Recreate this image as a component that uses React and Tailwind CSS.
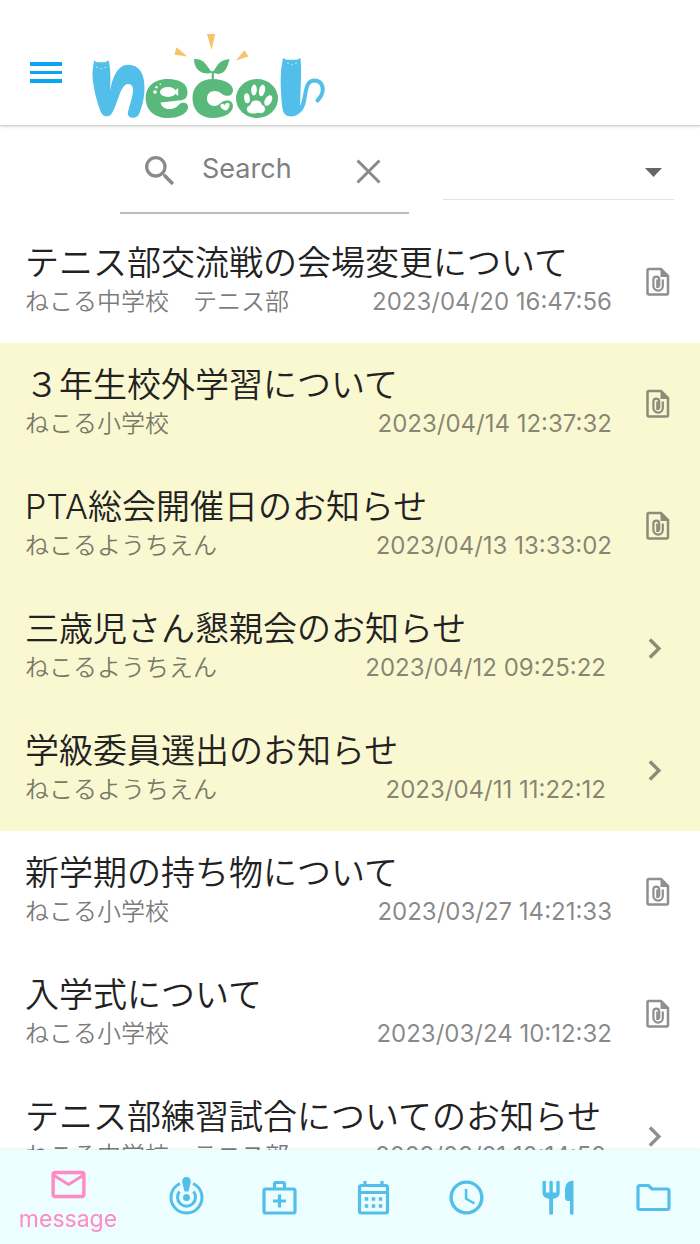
import React, { useState } from 'react';
import { MdAccessTime, MdChevronRight, MdMailOutline, MdSearch } from 'react-icons/md';

const MESSAGES = [
  { id: 1, title: 'テニス部交流戦の会場変更について', from: 'ねこる中学校　テニス部', date: '2023/04/20 16:47:56', file: true },
  { id: 2, title: '３年生校外学習について', from: 'ねこる小学校', date: '2023/04/14 12:37:32', file: true, unread: true },
  { id: 3, title: 'PTA総会開催日のお知らせ', from: 'ねこるようちえん', date: '2023/04/13 13:33:02', file: true, unread: true },
  { id: 4, title: '三歳児さん懇親会のお知らせ', from: 'ねこるようちえん', date: '2023/04/12 09:25:22', unread: true },
  { id: 5, title: '学級委員選出のお知らせ', from: 'ねこるようちえん', date: '2023/04/11 11:22:12', unread: true },
  { id: 6, title: '新学期の持ち物について', from: 'ねこる小学校', date: '2023/03/27 14:21:33', file: true },
  { id: 7, title: '入学式について', from: 'ねこる小学校', date: '2023/03/24 10:12:32', file: true },
  { id: 8, title: 'テニス部練習試合についてのお知らせ', from: 'ねこる中学校　テニス部', date: '2023/03/21 10:14:52' },
];

function Logo() {
  return (
    <svg viewBox="90 30 240 95" className="w-60 h-[95px]" role="img" aria-label="necol">
      {/* rays */}
      <path fill="#f8c26c" d="M207 34h8.2l-3.6 16zM176.5 47.3l-2 7.4 13 1.8zM244.5 50.2l4 6.4-12.7 3.8z" />
      {/* n */}
      <path fill="#52bfea" d="M94 60.5L97 62.3H105.3L108.5 60.3C110 66 111 74 110 91.5C112 77 118 64.7 128 64.7C139 64.7 144.5 73 144.5 88C144.5 98 142 107 139.5 113C138 117 135 118 132 117.8C128 117 127 114 128.5 110C130 104 133 96 133 90C133 86 131 84 128 84C124 84 121 90 119 96C116 104 114 111 111 114.5C109 117 104 117 102 114C98 107 92 84 92.5 72C92.8 67 94 64 94 60.5Z" />
      {/* e */}
      <path fill="#58b97b" d="M168 79C180 79 187.5 84 187.5 92C187.5 98 185 99.7 181 100.2L160.5 102.4C161.5 107 165 109 170 109C175 109 177 106.5 179.5 104C182 102 188 102 188 107C188 113 180 118 168 118C154 118 145.7 110 145.7 98C145.7 86 155 79 168 79Z" />
      <g fill="#fff">
        <ellipse cx="168" cy="92" rx="8" ry="5" />
        <path d="M173 92l5.2-4v8z" />
        <circle cx="155" cy="92" r="1.8" />
        <circle cx="156.5" cy="87.2" r="1.2" />
        <circle cx="160.3" cy="84.2" r="0.8" />
      </g>
      {/* c with the sprout */}
      <g fill="#58b97b">
        <path d="M213 79C224 79 233 84 233 90C233 95 229 96.5 225 95.5C221 94 220 91 214.5 91C210 91 207 94 207 98.5C207 103 210 106 215 106C219 106 221 101 226 100.5C230 100 233 102 233 106C233 113 224 118 213 118C200 118 192.5 110 192.5 98C192.5 86 201 79 213 79Z" />
        <path d="M194 59C205 58.5 206 66 212.5 72.5C205 75.5 194 72 194 59ZM229.5 59C218 60 217 67 212.5 72.5C223 77 227 70 229.5 59Z" />
        <path d="M211.7 71h2.2v9h-2.2z" />
      </g>
      <path fill="#fff" d="M226.5 110.5C222 110 220 107 220.5 105C221.5 103.2 224 103.5 224.6 105.5C225.3 102.5 228.5 102 229.5 104C230 106.5 228 109 226.5 110.5Z" />
      {/* o with the paw */}
      <ellipse cx="257" cy="98.5" rx="21" ry="19.5" fill="#58b97b" />
      <g fill="#fff">
        <ellipse cx="247" cy="98.3" rx="2.8" ry="5" transform="rotate(-8 247 98.3)" />
        <ellipse cx="254" cy="90" rx="2.8" ry="5.5" transform="rotate(3 254 90)" />
        <ellipse cx="262" cy="90.5" rx="3" ry="5.8" transform="rotate(12 262 90.5)" />
        <ellipse cx="268.3" cy="100.5" rx="3.3" ry="5.7" transform="rotate(30 268.3 100.5)" />
        <path d="M252 101.5C254 100 258 100 260 101.5C261 103 261.5 104.5 263 105.5C266 107 265.5 112 262 113C260 113.5 259 112.5 257 113C254 114 252 113.5 250 113C246 112.5 246 107 249 106C251 105 251 103 252 101.5Z" />
      </g>
      {/* l with the tail */}
      <path fill="#52bfea" d="M283 58l3 1.8h11l3.5-1.8c.8 8 .8 20 .2 28l-.7 19 3 3c-2 5-7 8.5-12 8.5-5 0-8-3-8.7-9C281 95 280 80 281.3 68z" />
      <path fill="none" stroke="#52bfea" strokeWidth="4" strokeLinecap="round" d="M299 111C308 104 302 81 314 80.5C323 80.5 326.5 91 317.5 100.5" />
      {/* cat faces */}
      <path fill="none" stroke="#fff" strokeWidth="0.6" d="M96 67l2 .5M104.5 67.5l2-.5M100.5 68.5h1.5M287 63l2 .5M295 63.5l2-.5M291 64.5h1.5" />
    </svg>
  );
}

function FileIcon() {
  return (
    <svg viewBox="0 0 35 35" className="size-[35px] opacity-50" fill="none" stroke="currentColor" strokeWidth="2.5">
      <path d="M9 4h12l7 7v17q0 1.500-1.500 1.500H9q-1.500 0-1.500-1.500V5.500Q7.500 4 9 4z" />
      <path fill="currentColor" stroke="none" d="M20.500 4v8h8z" />
      <path strokeWidth="2.2" d="M22.800 14.500v6.500a4.700 4.700 0 0 1-9.400 0v-6.500a2.900 2.900 0 0 1 5.800 0v7" />
      <path strokeWidth="2.2" d="M17.300 14.500v7.500h2" />
    </svg>
  );
}

function TargetIcon() {
  return (
    <svg viewBox="0 0 41 41" className="size-[41px]" fill="none" stroke="currentColor" strokeWidth="3">
      <path d="M14 6.5A15.5 15.5 0 1 0 27 6.5" />
      <path d="M13.5 14.5A9 9 0 1 0 27.5 14.5" />
      <circle cx="20.5" cy="20.5" r="3.5" fill="currentColor" stroke="none" />
      <path fill="currentColor" stroke="none" d="M20.5 0c3 0 4.5 2 4.3 5L22.5 14.5h-4L16.2 5C16 2 17.5 0 20.5 0z" />
    </svg>
  );
}

function MedkitIcon() {
  return (
    <svg viewBox="0 0 41 41" className="size-[41px]" fill="none" stroke="currentColor" strokeWidth="3.2">
      <rect x="5" y="12" width="31" height="24" rx="1.8" />
      <path d="M15.5 12V7q0-1.5 1.5-1.5h7q1.5 0 1.5 1.5v5M20.5 17.5v13M14 24h13" />
    </svg>
  );
}

function CalendarIcon() {
  return (
    <svg viewBox="0 0 41 41" className="size-[41px]" fill="none" stroke="currentColor" strokeWidth="3.2">
      <rect x="6.5" y="8.5" width="28" height="27.5" rx="2" />
      <path d="M6.5 15.5h28M12 4v5M29 4v5" />
      <path strokeWidth="3.5" strokeDasharray="3.5" d="M11.75 22h17.5M11.75 29h17.5" />
    </svg>
  );
}

function MealIcon() {
  return (
    <svg viewBox="0 0 41 41" className="size-[41px]" fill="currentColor">
      <path d="M3.5 5q0-1.3 1.7-1.3T6.9 5v10.5h3.5V5q0-1.3 1.7-1.3T13.8 5v10.5h3.5V5q0-1.3 1.7-1.3T20.7 5v10.5q0 5-6.7 6.5v14.5q0 1.300-1.900 1.300t-1.900-1.300V22Q3.500 20.500 3.500 15.500z" />
      <path d="M34.500 3.500v33q0 1.300-1.800 1.300T31 36.500V24h-1.500Q26 24 26 20.500V12q0-8 8.500-8.500z" />
    </svg>
  );
}

function FolderIcon() {
  return (
    <svg viewBox="0 0 41 41" className="size-[41px]" fill="none" stroke="currentColor" strokeWidth="3.2" strokeLinejoin="round">
      <path d="M7 8.5h8.5l3.500 3.500h15q2 0 2 2v16.500q0 2-2 2H7q-2 0-2-2v-20q0-2 2-2z" />
    </svg>
  );
}

const TABS = [
  { id: 'rollcall', label: 'attendance', Icon: TargetIcon },
  { id: 'health', label: 'health', Icon: MedkitIcon },
  { id: 'calendar', label: 'calendar', Icon: CalendarIcon },
  { id: 'time', label: 'time', Icon: MdAccessTime },
  { id: 'meal', label: 'meal', Icon: MealIcon },
  { id: 'folder', label: 'folder', Icon: FolderIcon },
];

function MessageRow({ msg }) {
  return (
    <li className={msg.unread ? 'bg-[#faf8d1]' : 'bg-white'}>
      <a href={`#message-${msg.id}`} className="flex items-center gap-7 px-[25px] h-[122px] text-[#222]">
        <div className="flex-1 min-w-0 pb-0.5">
          <div className="text-[34px] leading-[42px] whitespace-nowrap">{msg.title}</div>
          <div className="flex justify-between text-[24px] leading-[36px] text-[#222]/60 whitespace-nowrap">
            <span>{msg.from}</span>
            <time className="font-normal text-[#222]/55">{msg.date}</time>
          </div>
        </div>
        {msg.file ? <FileIcon /> : <MdChevronRight className="size-[41px] opacity-50" />}
      </a>
    </li>
  );
}

export default function App() {
  const [query, setQuery] = useState('');

  return (
    <div className="h-screen flex flex-col bg-white font-[350] font-['Inter','Noto_Sans_CJK_JP',sans-serif]">
      <header className="shrink-0 flex items-end gap-7 h-[126px] pl-[30px] border-b border-[#d4d4d4] shadow-sm">
        <button type="button" aria-label="menu" className="flex flex-col gap-[5px] mb-[42px]">
          <span className="w-8 h-1 bg-[#08a5f4]"></span>
          <span className="w-8 h-[3px] bg-[#08a5f4]"></span>
          <span className="w-8 h-1 bg-[#08a5f4]"></span>
        </button>
        <Logo />
      </header>

      {/* Search and filter */}
      <div className="shrink-0 grid grid-cols-[5fr_4fr] items-start gap-[34px] pl-[120px] pr-[26px] h-[95px]">
        <div className="min-w-0 flex items-center h-[88px] border-b-2 border-[#bbb] px-5 pt-1">
          <MdSearch className="size-10 shrink-0 text-[#8a8a8a]" />
          <input type="text" aria-label="Search" placeholder="Search" value={query} onChange={e => setQuery(e.target.value)}
            className="flex-1 min-w-0 ml-[22px] text-[27px] leading-[36px] pb-1 font-normal text-[#444] placeholder:text-[#808080] outline-none" />
          <button type="button" aria-label="clear" onClick={() => setQuery('')} className="text-[#8a8a8a]">
            <svg viewBox="0 0 41 41" className="size-[41px]" fill="none" stroke="currentColor" strokeWidth="3">
              <path d="M9.5 9.5l22 22M31.5 9.5l-22 22" />
            </svg>
          </button>
        </div>
        <div className="min-w-0 flex items-center h-[74px] border-b border-[#e2e2e2] pt-[19px] pr-3">
          <select aria-label="filter" className="flex-1 min-w-0 h-10 appearance-none bg-transparent outline-none">
            <option value=""></option>
          </select>
          <svg viewBox="0 0 17 9" className="w-[17px] h-[9px]" fill="#666"><path d="M0 0h17L8.5 9z" /></svg>
        </div>
      </div>

      <ul className="flex-1 min-h-0 overflow-y-auto [scrollbar-width:none]">
        {MESSAGES.map(m => <MessageRow key={m.id} msg={m} />)}
      </ul>

      <nav className="shrink-0 flex h-[94px] bg-[#ecfeff] text-[#52bfea] shadow-[0_-1px_3px_rgba(0,0,0,0.08)]">
        <button type="button" className="w-[140px] flex flex-col items-center pt-[14px] pr-1 text-[#ff8ac4]">
          <MdMailOutline className="size-[41px]" />
          <span className="text-[23px] leading-7 font-normal">message</span>
        </button>
        {TABS.map(({ id, label, Icon }) => (
          <button key={id} type="button" aria-label={label} className="flex-1 flex items-center justify-center">
            <Icon className="size-[41px]" />
          </button>
        ))}
      </nav>
    </div>
  );
}
